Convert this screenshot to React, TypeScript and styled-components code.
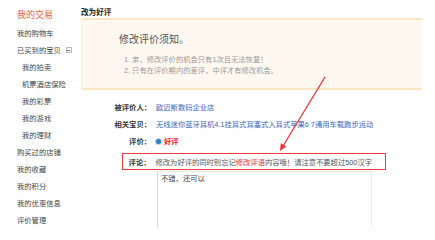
import styled, { createGlobalStyle } from "styled-components";

const GlobalStyle = createGlobalStyle`
  html, body {
    margin: 0;
    padding: 0;
    background: #fff;
  }

  body {
    font-family: "Liberation Sans", "Noto Sans CJK SC", sans-serif;
    color: #333;
  }
`;

const Page = styled.div`
  position: relative;
  display: flex;
  width: 435px;
  height: 240px;
  overflow: hidden;
  font-size: 7.3px;
`;

const Sidebar = styled.ul`
  width: 81px;
  flex-shrink: 0;
  margin: 0;
  padding: 6px 0 0 17px;
  box-sizing: border-box;
  list-style: none;
`;

const NavItem = styled.li<{ $sub?: boolean; $head?: boolean }>`
  display: flex;
  align-items: center;
  height: 17px;
  padding-left: ${({ $sub }) => ($sub ? "5px" : "0")};
  color: ${({ $head }) => ($head ? "#f5603a" : "#444")};
  font-size: ${({ $head }) => ($head ? "9px" : "7.3px")};
  margin-bottom: ${({ $head }) => ($head ? "1.5px" : "0")};
`;

const Toggle = styled.span`
  display: inline-flex;
  align-items: center;
  justify-content: center;
  width: 6px;
  height: 6px;
  margin-left: 5px;
  border: 1px solid #bbb;
  box-sizing: border-box;

  &::after {
    content: "";
    width: 3px;
    height: 1px;
    background: #777;
  }
`;

const Main = styled.div`
  flex: 1;
  padding-right: 13px;
`;

const Title = styled.div`
  margin-top: 8px;
  height: 10px;
  line-height: 10px;
  font-size: 7.6px;
  font-weight: bold;
  color: #222;
`;

const Notice = styled.div`
  height: 72px;
  box-sizing: border-box;
  padding: 13px 0 0 37px;
  background: #fff8f0;
  border-top: 2px solid #fde6c4;
  border-bottom: 2px solid #fde6c4;
  border-left: 1px solid #fdeed8;
`;

const NoticeHead = styled.div`
  font-size: 10px;
  line-height: 14px;
  color: #555;
  margin-bottom: 6.5px;
`;

const NoticeLine = styled.div`
  padding-left: 5px;
  line-height: 11px;
  color: #9a9a9a;
`;

const Form = styled.div`
  margin-top: 8.5px;
`;

const Row = styled.div`
  display: flex;
  align-items: center;
  height: 17px;
`;

const Label = styled.span<{ $w?: number }>`
  width: ${({ $w }) => $w ?? 70}px;
  flex-shrink: 0;
  text-align: right;
  font-weight: bold;
  color: #333;
`;

const Value = styled.span<{ $tone?: "link" | "hot" | "muted" }>`
  margin-left: 5px;
  white-space: nowrap;
  color: ${({ $tone }) =>
    $tone === "link" ? "#3a66c4" : $tone === "hot" ? "#f02020" : "#555"};
  font-weight: ${({ $tone }) => ($tone === "hot" ? "bold" : "normal")};
`;

const Radio = styled.span`
  display: inline-block;
  width: 5px;
  height: 5px;
  margin-left: 5px;
  border-radius: 50%;
  background: #2f7fd0;
  box-shadow: 0 0 0 1px #c8d3de;
`;

const CommentRow = styled.div`
  display: flex;
  align-items: center;
  width: 264px;
  height: 17px;
  margin: 3.5px 0 0 41px;
  border: 1.5px solid #ec3b3b;
  box-sizing: border-box;
`;

const Hot = styled.span`
  color: #f01c1c;
`;

const TextBox = styled.div`
  width: 215px;
  height: 56px;
  margin: 1px 0 0 76px;
  padding: 2px 3px;
  box-sizing: border-box;
  border-top: 1px solid #e4e4e4;
  border-left: 1px solid #d6d6d6;
  border-right: 1px solid #ececec;
  line-height: 10px;
  color: #444;
`;

const Overlay = styled.svg`
  position: absolute;
  inset: 0;
  pointer-events: none;
`;

const nav = [
  { text: "我的购物车" },
  { text: "已买到的宝贝", toggle: true },
  { text: "我的拍卖", sub: true },
  { text: "机票酒店保险", sub: true },
  { text: "我的彩票", sub: true },
  { text: "我的游戏", sub: true },
  { text: "我的理财", sub: true },
  { text: "购买过的店铺" },
  { text: "我的收藏" },
  { text: "我的积分" },
  { text: "我的优惠信息" },
  { text: "评价管理" },
];

export default function App() {
  return (
    <Page>
      <GlobalStyle />
      <Sidebar>
        <NavItem $head>我的交易</NavItem>
        {nav.map((item) => (
          <NavItem key={item.text} $sub={item.sub}>
            {item.text}
            {item.toggle && <Toggle />}
          </NavItem>
        ))}
      </Sidebar>

      <Main>
        <Title>改为好评</Title>
        <Notice>
          <NoticeHead>修改评价须知。</NoticeHead>
          <NoticeLine>1. 亲，修改评价的机会只有1次且无法恢复！</NoticeLine>
          <NoticeLine>2. 只有在评价期内的差评，中评才有修改机会。</NoticeLine>
        </Notice>

        <Form>
          <Row>
            <Label>被评价人：</Label>
            <Value $tone="link">欧迈斯数码企业店</Value>
          </Row>
          <Row>
            <Label>相关宝贝：</Label>
            <Value $tone="link">无线迷你蓝牙耳机4.1挂耳式耳塞式入耳式苹果6 7通用车载跑步运动</Value>
          </Row>
          <Row>
            <Label>评价：</Label>
            <Radio />
            <Value $tone="hot" style={{ marginLeft: 3 }}>好评</Value>
          </Row>
          <CommentRow>
            <Label $w={27.5}>评论：</Label>
            <Value>
              修改为好评的同时别忘记<Hot>修改评语</Hot>内容哦！请注意不要超过500汉字
            </Value>
          </CommentRow>
          <TextBox>不错，还可以</TextBox>
        </Form>
      </Main>

      <Overlay width="435" height="240" viewBox="0 0 435 240">
        <line x1="325" y1="77" x2="283" y2="146" stroke="#f03434" strokeWidth="1.3" />
        <polygon points="280,151 286.4,146.6 280.8,143.2" fill="#f03434" />
      </Overlay>
    </Page>
  );
}
